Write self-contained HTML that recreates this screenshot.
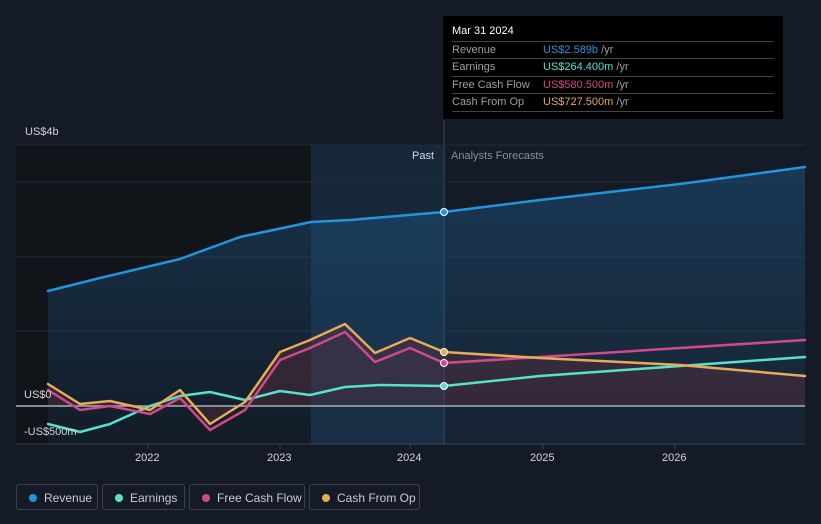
<!DOCTYPE html>
<html><head><meta charset="utf-8"><style>
body{margin:0;background:#151b26;width:821px;height:524px;overflow:hidden;font-family:"Liberation Sans",sans-serif;position:relative}
.tt{position:absolute;left:443px;top:16px;width:340px;height:103px;background:#000;color:#fff;font-size:11px}
.tt .h{position:absolute;left:9px;top:9px;font-size:11px}
.row{position:absolute;left:9px;width:322px;height:17px;border-top:1px solid #444;color:#9aa0a8;line-height:17px}
.row span{position:absolute;left:91px}
.lg{position:absolute;top:484px;height:26px;border:1px solid #3b404a;border-radius:3px;color:#c8ccd2;font-size:12px;line-height:26px;box-sizing:border-box}
.lg i{position:absolute;left:12px;top:9px;width:8px;height:8px;border-radius:50%}
.lg b{font-weight:normal;position:absolute;left:27px}
.ax{position:absolute;color:#d0d4da;font-size:11px}
</style></head><body>
<svg width="821" height="524" style="position:absolute;left:0;top:0">
<defs>
<linearGradient id="rv" x1="0" y1="0" x2="0" y2="1"><stop offset="0" stop-color="#1f5a8a" stop-opacity=".45"/><stop offset="1" stop-color="#1f5a8a" stop-opacity=".12"/></linearGradient>
</defs>
<rect x="16" y="145" width="295" height="300" fill="#111419"/>
<rect x="311" y="145" width="133" height="300" fill="#17283a"/>
<line x1="444" y1="120" x2="444" y2="445" stroke="#3a4a5c"/>
<g stroke="#252b35" stroke-width="1"><line x1="16" y1="145" x2="805" y2="145"/><line x1="16" y1="182" x2="805" y2="182"/><line x1="16" y1="257" x2="805" y2="257"/><line x1="16" y1="331" x2="805" y2="331"/></g>
<path d="M48,291 L100,278 L180,259 L240,237 L311,222 L350,220 L444,212 L540,200 L680,184 L805,167 L805,444 L48,444Z" fill="url(#rv)"/>
<path d="M48,384 L80,404 L110,401 L150,410 L180,390 L210,424 L245,402 L280,352 L310,340 L345,324 L375,353 L410,338 L444,352 L540,358 L680,365 L805,376 L805,406 L48,406Z" fill="#6b3040" opacity=".35"/>
<line x1="16" y1="406" x2="805" y2="406" stroke="#aab0b8" stroke-width="1.5"/>
<line x1="16" y1="444" x2="805" y2="444" stroke="#3a404a"/>
<g fill="none" stroke-width="2.5" stroke-linejoin="round" stroke-linecap="round">
<polyline stroke="#2394df" points="48,291 100,278 180,259 240,237 311,222 350,220 444,212 540,200 680,184 805,167"/>
<polyline stroke="#58e0cf" points="48,424 80,432 110,424 150,406 180,396 210,392 245,400 280,391 310,395 345,387 380,385 444,386 540,376 680,366 805,357"/>
<polyline stroke="#d04a8a" points="48,390 80,410 110,406 150,414 180,398 210,430 245,410 280,360 310,348 345,332 375,362 410,348 444,363 540,357 680,348 805,340"/>
<polyline stroke="#e8aa55" points="48,384 80,404 110,401 150,410 180,390 210,424 245,402 280,352 310,340 345,324 375,353 410,338 444,352 540,358 680,365 805,376"/>
</g>
<circle cx="444" cy="212" r="3.5" fill="#2394df" stroke="#fff"/>
<circle cx="444" cy="386" r="3.5" fill="#58e0cf" stroke="#fff"/>
<circle cx="444" cy="363" r="3.5" fill="#d04a8a" stroke="#fff"/>
<circle cx="444" cy="352" r="3.5" fill="#e8aa55" stroke="#fff"/>
<g stroke="#3a404a"><line x1="148" y1="444" x2="148" y2="449"/><line x1="280" y1="444" x2="280" y2="449"/><line x1="410" y1="444" x2="410" y2="449"/><line x1="543" y1="444" x2="543" y2="449"/><line x1="675" y1="444" x2="675" y2="449"/></g>
</svg>
<div class="ax" style="left:25px;top:126px">US$4b</div>
<div class="ax" style="left:24px;top:389px">US$0</div>
<div class="ax" style="left:24px;top:426px">-US$500m</div>
<div class="ax" style="left:412px;top:150px">Past</div>
<div class="ax" style="left:451px;top:150px;color:#8a9098">Analysts Forecasts</div>
<div class="ax" style="left:135px;top:452px">2022</div>
<div class="ax" style="left:267px;top:452px">2023</div>
<div class="ax" style="left:397px;top:452px">2024</div>
<div class="ax" style="left:530px;top:452px">2025</div>
<div class="ax" style="left:662px;top:452px">2026</div>
<div class="tt"><div class="h">Mar 31 2024</div>
<div class="row" style="top:25px">Revenue<span style="color:#2394df">US$2.589b <em style="font-style:normal;color:#9aa0a8">/yr</em></span></div>
<div class="row" style="top:42px">Earnings<span style="color:#58e0cf">US$264.400m <em style="font-style:normal;color:#9aa0a8">/yr</em></span></div>
<div class="row" style="top:60px">Free Cash Flow<span style="color:#d04a8a">US$580.500m <em style="font-style:normal;color:#9aa0a8">/yr</em></span></div>
<div class="row" style="top:77px;border-bottom:1px solid #444">Cash From Op<span style="color:#e8aa55">US$727.500m <em style="font-style:normal;color:#9aa0a8">/yr</em></span></div>
</div>
<div class="lg" style="left:16px;width:82px"><i style="background:#2394df"></i><b>Revenue</b></div>
<div class="lg" style="left:102px;width:83px"><i style="background:#58e0cf"></i><b>Earnings</b></div>
<div class="lg" style="left:189px;width:116px"><i style="background:#d04a8a"></i><b>Free Cash Flow</b></div>
<div class="lg" style="left:309px;width:111px"><i style="background:#e8aa55"></i><b>Cash From Op</b></div>
</body></html>
